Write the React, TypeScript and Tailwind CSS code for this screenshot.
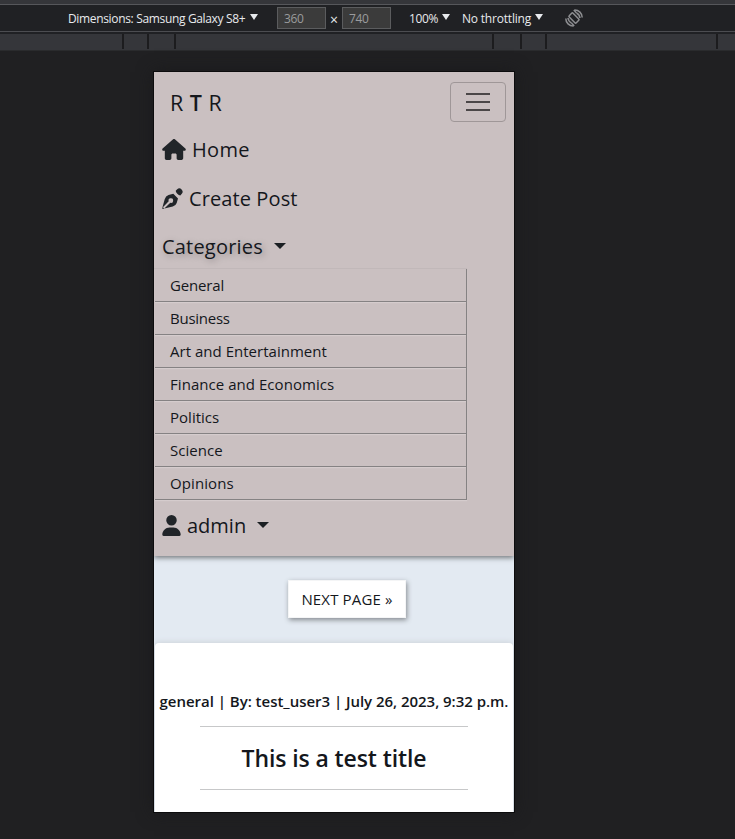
import React from "react";
import { FaHouse, FaUser } from "react-icons/fa6";

const categories = [
  { name: "General", spacing: "tracking-[-0.15px]" },
  { name: "Business", spacing: "tracking-[-0.25px]" },
  { name: "Art and Entertainment", spacing: "tracking-[0.02px]" },
  { name: "Finance and Economics", spacing: "tracking-[0.05px]" },
  { name: "Politics", spacing: "tracking-[0.02px]" },
  { name: "Science", spacing: "tracking-[0.05px]" },
  { name: "Opinions", spacing: "tracking-[0.1px]" },
];

// Widths of the ruler's segments; each is followed by a 2px divider.
const segments = ["w-[122px]", "w-[23px]", "w-[25px]", "w-[316px]", "w-[26px]", "w-[23px]", "w-[169px]"];

function SmallArrow() {
  return (
    <svg className="-mt-[2px] h-[6px] w-[8px] shrink-0" viewBox="0 0 8 6">
      <path d="M0 0h8L4 6z" fill="#e8eaed" />
    </svg>
  );
}

function Caret() {
  return (
    <svg className="-mt-[3px] h-[6px] w-[12px] shrink-0" viewBox="0 0 12 6">
      <path d="M0 0h12L6 6z" fill="#1b1f23" />
    </svg>
  );
}

function PenIcon() {
  return (
    <svg className="-mt-[2px] h-[21px] w-[21px] shrink-0" viewBox="0 0 21 21" fill="#212529">
      <path d="M15.200 1.300Q17.300-.600 19.600 1.400Q21.700 3.600 19.800 5.800L18.300 7.400Q16.800 7.200 15.300 5.700Q13.800 4.200 13.700 2.800z" />
      <path
        fillRule="evenodd"
        d="M.9 19.200L6.700 13.300A2.300 2.300 0 1 1 8.300 14.800L2.300 20.500L10.800 18.500Q14 17.300 14.700 15L16 10.500L11.300 5.800L6.500 7Q3.700 8 2.700 11.300L.2 20.200z"
      />
      <path d="M.2 20.200L.9 19.200L2.300 20.500L.7 21z" />
    </svg>
  );
}

function RotateIcon() {
  return (
    <svg className="ml-[22px] h-[18px] w-[18px]" viewBox="0 0 18 18" fill="none" stroke="#8d8e91" strokeWidth="1.5">
      <rect x="6.3" y="4" width="5.4" height="10" rx="1" transform="rotate(-45 9 9)" />
      <path d="M.8 9.500A7.500 7.500 0 0 0 8.500 17M17.200 8.500A7.500 7.500 0 0 0 9.500 1" />
      <path d="M3 9A6.500 6.500 0 0 0 6.500 14M15 9A6.500 6.500 0 0 0 11.500 4" />
      <path d="M6.500 14l2.700 2.900M11.500 4L8.800 1.100" />
    </svg>
  );
}

function Toolbar() {
  return (
    <header>
      <div className="h-[5px] border-b border-[#56575b] bg-[#35363a]" />
      <div className="flex h-[27px] items-center border-b border-[#4c4d51] bg-[#202124] pl-[68px] text-[12px] text-[#e8eaed]">
        <span className="w-[182px] whitespace-nowrap pt-px tracking-[-0.34px]">Dimensions: Samsung Galaxy S8+</span>
        <SmallArrow />
        <span className="ml-[19px] h-[22px] w-[49px] border border-[#5b5c5e] bg-[#3b3b3b] pl-[6px] leading-[21px] tracking-[-0.4px] text-[#9a9b9d]">360</span>
        <span className="w-[16px] pt-[4px] text-center text-[14px] leading-none">×</span>
        <span className="h-[22px] w-[49px] border border-[#5b5c5e] bg-[#3b3b3b] pl-[6px] leading-[21px] tracking-[-0.4px] text-[#9a9b9d]">740</span>
        <span className="ml-[18px] w-[33px] pt-px tracking-[-0.4px]">100%</span>
        <SmallArrow />
        <span className="ml-[12px] w-[73px] whitespace-nowrap pt-px tracking-[-0.2px]">No throttling</span>
        <SmallArrow />
        <RotateIcon />
      </div>
      <div className="flex h-[19px] border-b border-[#2a2b2d] bg-[#35363a] pt-[2px] [box-shadow:inset_0_2px_0_#202124]">
        {segments.map((width, i) => (
          <div key={i} className={`${width} box-content h-[15px] shrink-0 border-r-2 border-[#1c1c1e]`} />
        ))}
      </div>
    </header>
  );
}

export default function App() {
  return (
    <div className="h-[839px] w-[735px] overflow-hidden bg-[#202022] font-['Open_Sans','Noto_Sans',sans-serif]">
      <Toolbar />
      <main className="ml-[154px] mt-[21px] h-[740px] w-[360px] overflow-hidden bg-[#e3eaf2] text-[#14171c] [box-shadow:0_0_0_1px_#0c0c0d,0_0_16px_#19191b]">
        <nav className="relative h-[484px] bg-[#cac0c1] [box-shadow:0_2px_5px_#777b7e]">
          <div className="flex h-[60px] items-center justify-between pl-[16px] pr-[8px]">
            <span className="pt-[3px] text-[21.5px] font-normal tracking-[0.5px]">
              R <b className="font-semibold">T</b> R
            </span>
            <button className="flex h-[40px] w-[56px] flex-col items-center justify-center gap-[6px] rounded-[4px] border border-[#9f9798]">
              <span className="h-[2px] w-[24px] bg-[#4b4748]" />
              <span className="h-[2px] w-[24px] bg-[#4b4748]" />
              <span className="h-[2px] w-[24px] bg-[#4b4748]" />
            </button>
          </div>
          <a className="flex h-[36px] items-center pl-[8px]">
            <FaHouse className="-mt-[2px] h-[21px] w-[24px] text-[#212529]" />
            <span className="ml-[6px] text-[20px] tracking-[0.3px]">Home</span>
          </a>
          <a className="mt-[13px] flex h-[36px] items-center pl-[8px]">
            <PenIcon />
            <span className="ml-[6px] text-[20px] tracking-[0.1px]">Create Post</span>
          </a>
          <div className="mt-[12px] flex h-[36px] items-center pl-[8px]">
            <span className="w-[112px] text-[20px] tracking-[0.2px] [text-shadow:2px_2px_6px_#8d8586]">Categories</span>
            <Caret />
          </div>
          <ul className="mt-[3px] w-[313px] border-t border-[#c1b8b9] pl-px">
            {categories.map((c) => (
              <li
                key={c.name}
                className={`${c.spacing} h-[33px] border-b border-r border-[#858283] pl-[15px] text-[15px] leading-[32px] [box-shadow:0_1px_1px_#d5cccd]`}
              >
                {c.name}
              </li>
            ))}
          </ul>
          <div className="mt-[7px] flex h-[38px] items-center pl-[8px]">
            <FaUser className="-mt-[2px] h-[21px] w-[19px] text-[#212529]" />
            <span className="ml-[6px] w-[70px] text-[20px]">admin</span>
            <Caret />
          </div>
        </nav>
        <div className="flex h-[87px] pl-[134px] pt-[25px]">
          <button className="-mt-px h-[38px] w-[118px] whitespace-nowrap border border-[#f4f5f6] bg-white text-[15px] tracking-[0.15px] [box-shadow:1px_2px_5px_#868b90]">
            NEXT PAGE »
          </button>
        </div>
        <article className="mx-px flex h-[200px] flex-col items-center rounded-t-[4px] bg-white [box-shadow:0_0_6px_#c8cdd2]">
          <p className="mt-[47px] h-[22px] whitespace-nowrap text-[15px] font-semibold leading-[22px] tracking-[-0.03px]">
            general | By: test_user3 | July 26, 2023, 9:32 p.m.
          </p>
          <div className="mt-[14px] flex h-[64px] w-[268px] items-center justify-center border-y border-[#c7c8c9]">
            <h1 className="whitespace-nowrap text-[23px] font-semibold tracking-[-0.1px]">This is a test title</h1>
          </div>
        </article>
      </main>
    </div>
  );
}
